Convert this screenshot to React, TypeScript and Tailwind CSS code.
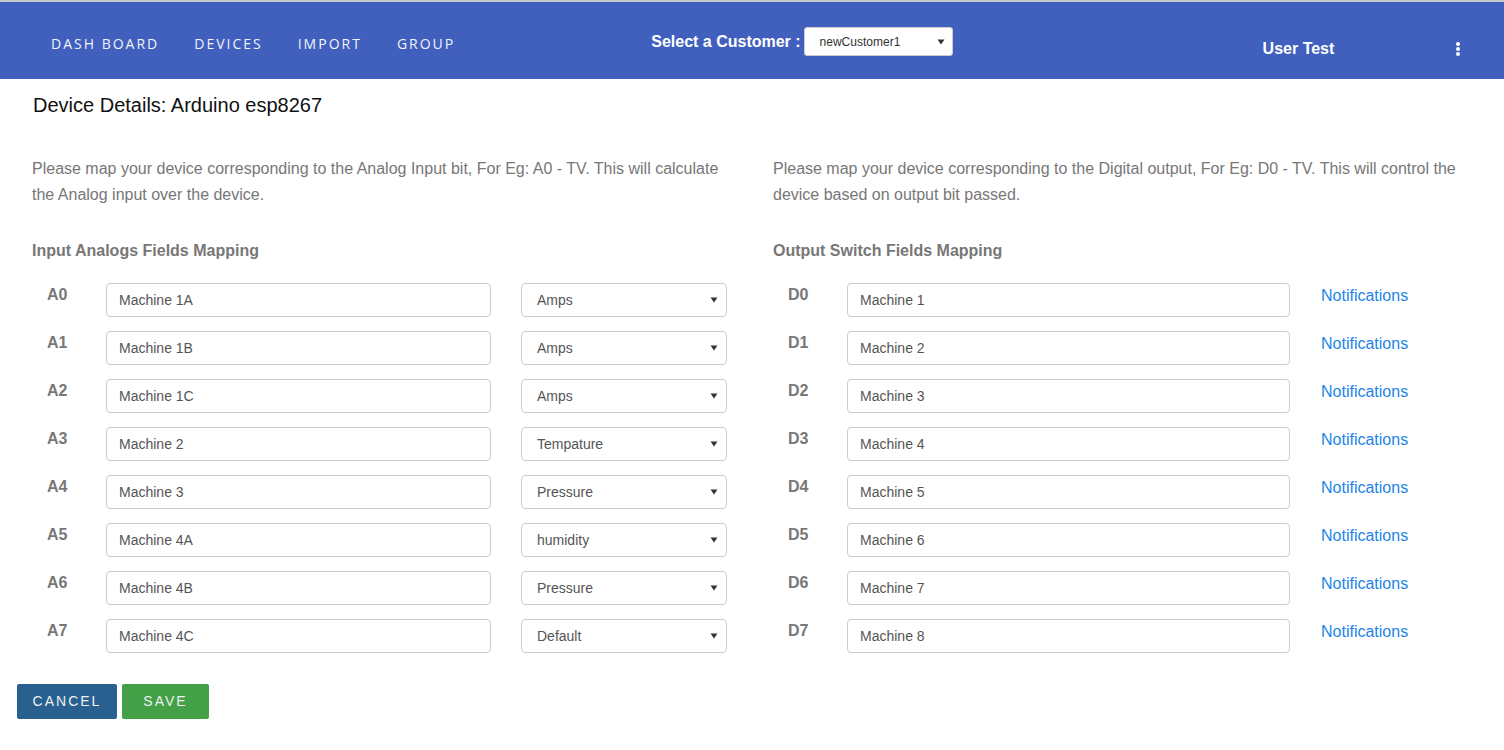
import { useState } from 'react';

const navItems = ['DASH BOARD', 'DEVICES', 'IMPORT', 'GROUP'];

const analogRows = [
  { bit: 'A0', name: 'Machine 1A', unit: 'Amps' },
  { bit: 'A1', name: 'Machine 1B', unit: 'Amps' },
  { bit: 'A2', name: 'Machine 1C', unit: 'Amps' },
  { bit: 'A3', name: 'Machine 2', unit: 'Tempature' },
  { bit: 'A4', name: 'Machine 3', unit: 'Pressure' },
  { bit: 'A5', name: 'Machine 4A', unit: 'humidity' },
  { bit: 'A6', name: 'Machine 4B', unit: 'Pressure' },
  { bit: 'A7', name: 'Machine 4C', unit: 'Default' },
];

const switchRows = Array.from({ length: 8 }, (_, i) => ({
  bit: `D${i}`,
  name: `Machine ${i + 1}`,
}));

function Caret() {
  return (
    <svg width="8" height="6" viewBox="0 0 8 6" className="shrink-0">
      <path d="M0.5 0.5h7L4 5.5z" fill="#333" />
    </svg>
  );
}

function FakeSelect({ value, className }: { value: string; className?: string }) {
  return (
    <div
      className={`flex items-center justify-between h-[34px] rounded-[4px] border border-[#ccc] bg-white pl-[15px] pr-[8px] text-[14px] text-[#555] ${className ?? ''}`}
    >
      <span>{value}</span>
      <Caret />
    </div>
  );
}

function TextInput({ value, className }: { value: string; className?: string }) {
  const [v, setV] = useState(value);
  return (
    <input
      value={v}
      onChange={(e) => setV(e.target.value)}
      className={`h-[34px] rounded-[4px] border border-[#ccc] bg-white px-[12px] text-[14px] text-[#555] outline-none ${className ?? ''}`}
    />
  );
}

export default function App() {
  return (
    <div className="min-h-[750px] bg-white font-['Liberation_Sans',Arial,sans-serif]">
      {/* Top bar */}
      <div className="h-[2px] bg-[#c9c9c9]" />
      <nav className="flex h-[77px] items-start bg-[#4160be] text-white">
        <ul className="flex items-center gap-[35px] pl-[51px] pt-[32px] font-['Open_Sans',sans-serif] text-[14px] leading-[20px] tracking-[2px] text-[#f2f3fb]">
          {navItems.map((item) => (
            <li key={item}>{item}</li>
          ))}
        </ul>
        <div className="ml-[196px] pt-[25px] flex items-center gap-[3px]">
          <span className="text-[16px] font-bold leading-[20px]">Select a Customer :</span>
          <FakeSelect value="newCustomer1" className="!h-[29px] w-[149px] !text-[12px] !text-[#333] !pl-[15px] !pr-[7px] !rounded-[3px]" />
        </div>
        <span className="ml-[310px] pt-[37px] text-[16px] font-bold leading-[20px]">User Test</span>
        <div className="ml-[122px] pt-[40px] flex flex-col gap-[1px]">
          <span className="block h-[4px] w-[4px] rounded-full bg-white" />
          <span className="block h-[4px] w-[4px] rounded-full bg-white" />
          <span className="block h-[4px] w-[4px] rounded-full bg-white" />
        </div>
      </nav>

      <main className="px-[17px]">
        <h1 className="pl-[16px] pt-[14px] text-[20px] leading-[24px] text-[#111]">
          Device Details: Arduino esp8267
        </h1>

        <div className="mt-[39px] grid grid-cols-[741px_1fr]">
          {/* Analog inputs */}
          <section className="px-[15px]">
            <p className="text-[16px] leading-[26px] text-[#777]">
              Please map your device corresponding to the Analog Input bit, For Eg: A0 - TV. This will calculate the
              Analog input over the device.
            </p>
            <h2 className="mt-[32px] text-[16px] font-bold leading-[22px] text-[#777]">Input Analogs Fields Mapping</h2>
            <div className="mt-[21px] flex flex-col gap-[14px]">
              {analogRows.map((row) => (
                <div key={row.bit} className="flex items-start">
                  <span className="w-[74px] pl-[15px] pt-[1px] text-[16px] font-bold leading-[22px] text-[#777]">
                    {row.bit}
                  </span>
                  <TextInput value={row.name} className="w-[385px]" />
                  <FakeSelect value={row.unit} className="ml-[30px] w-[206px]" />
                </div>
              ))}
            </div>
          </section>

          {/* Digital outputs */}
          <section className="px-[15px]">
            <p className="text-[16px] leading-[26px] text-[#777]">
              Please map your device corresponding to the Digital output, For Eg: D0 - TV. This will control the device
              based on output bit passed.
            </p>
            <h2 className="mt-[32px] text-[16px] font-bold leading-[22px] text-[#777]">Output Switch Fields Mapping</h2>
            <div className="mt-[21px] flex flex-col gap-[14px]">
              {switchRows.map((row) => (
                <div key={row.bit} className="flex items-start">
                  <span className="w-[74px] pl-[15px] pt-[1px] text-[16px] font-bold leading-[22px] text-[#777]">
                    {row.bit}
                  </span>
                  <TextInput value={row.name} className="w-[443px]" />
                  <a href="#" className="ml-[31px] pt-[2px] text-[16px] leading-[22px] text-[#1e85e8]">
                    Notifications
                  </a>
                </div>
              ))}
            </div>
          </section>
        </div>

        <div className="mt-[31px] flex gap-[5px]">
          <button className="h-[35px] w-[100px] rounded-[2px] bg-[#286090] text-[14px] tracking-[2px] text-[#f0f0f0]">
            CANCEL
          </button>
          <button className="h-[35px] w-[87px] rounded-[2px] bg-[#43a047] text-[14px] tracking-[2px] text-[#f0f0f0]">
            SAVE
          </button>
        </div>
      </main>
    </div>
  );
}
